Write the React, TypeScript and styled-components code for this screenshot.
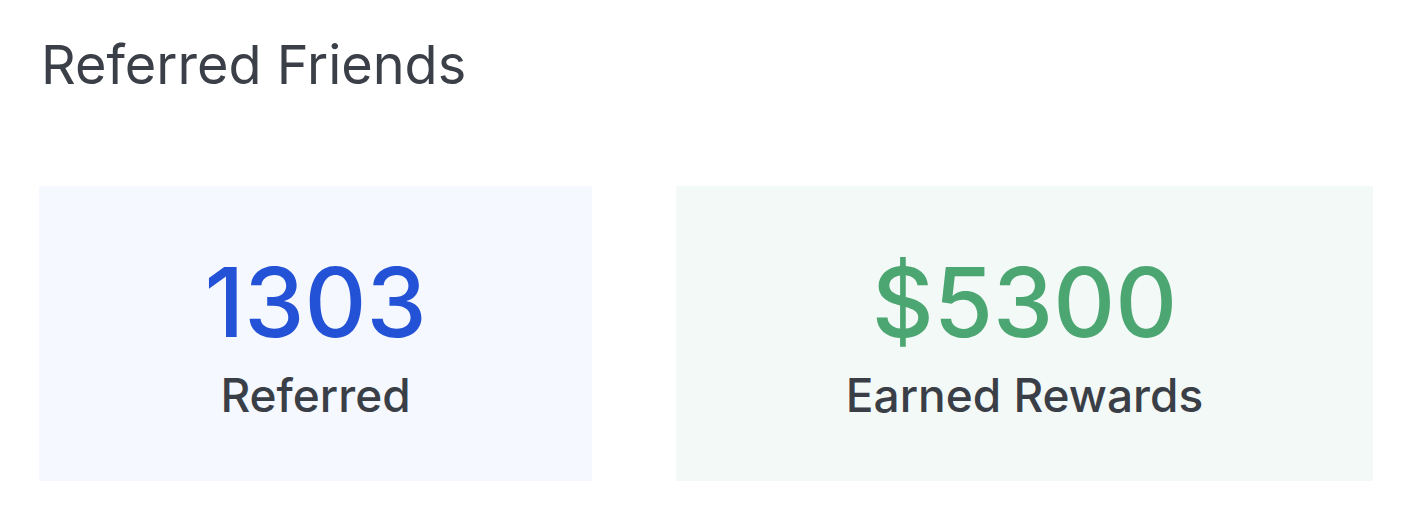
import React from "react";
import styled, { createGlobalStyle } from "styled-components";

const Global = createGlobalStyle`
  html, body { margin: 0; padding: 0; background: #ffffff; }
  body { font-family: Inter, "Noto Sans", sans-serif; }
`;

const Page = styled.div`
  width: 1428px;
  height: 528px;
  box-sizing: border-box;
  padding: 33px 55px 0 39px;
  display: flex;
  flex-direction: column;
`;

const Title = styled.h1`
  margin: 0 0 0 2px;
  font-size: 54px;
  line-height: 64px;
  font-weight: 400;
  color: #3b4048;
`;

const Cards = styled.div`
  margin-top: 89px;
  display: grid;
  grid-template-columns: 553px 697px;
  gap: 84px;
`;

const Card = styled.div<{ $bg: string }>`
  height: 295px;
  background: ${(p) => p.$bg};
  display: flex;
  flex-direction: column;
  align-items: center;
  justify-content: center;
  padding-top: 2px;
  box-sizing: border-box;
`;

const Value = styled.div<{ $color: string }>`
  font-size: 96px;
  line-height: 110px;
  font-weight: 500;
  color: ${(p) => p.$color};
`;

const Label = styled.div`
  margin-top: 10px;
  font-size: 46px;
  line-height: 56px;
  font-weight: 500;
  color: #3a3f47;
`;

export default function App() {
  return (
    <>
      <Global />
      <Page>
        <Title>Referred Friends</Title>
        <Cards>
          <Card $bg="#f5f8fe">
            <Value $color="#2352d6">1303</Value>
            <Label>Referred</Label>
          </Card>
          <Card $bg="#f3f9f7">
            <Value $color="#4ca672">$5300</Value>
            <Label>Earned Rewards</Label>
          </Card>
        </Cards>
      </Page>
    </>
  );
}
